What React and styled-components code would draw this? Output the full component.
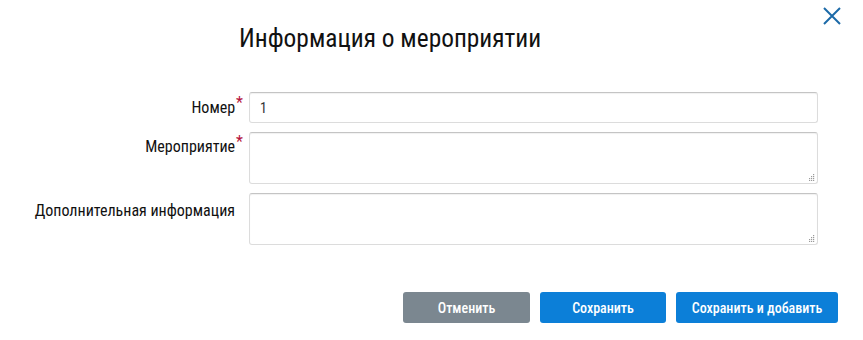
import React from "react";
import styled, { createGlobalStyle } from "styled-components";

const GlobalStyle = createGlobalStyle`
  html, body {
    margin: 0;
    padding: 0;
    background: #fff;
  }
  body {
    font-family: "Roboto Condensed", Roboto, sans-serif;
    font-stretch: condensed;
    color: #1a1a1a;
  }
`;

const Modal = styled.div`
  width: 863px;
  height: 340px;
  position: relative;
  box-sizing: border-box;
  padding: 22px 25px 0 0;
  display: flex;
  flex-direction: column;
`;

const CloseButton = styled.button`
  position: absolute;
  top: 5px;
  right: 20px;
  width: 22px;
  height: 22px;
  padding: 0;
  border: none;
  background: transparent;
  cursor: pointer;
`;

const Title = styled.h2`
  margin: 0 0 0 239px;
  font-size: 25.4px;
  font-weight: 400;
  line-height: 32px;
  color: #111;
`;

const Form = styled.form`
  margin-top: 38px;
  padding-right: 20px;
  display: flex;
  flex-direction: column;
  gap: 9px;
`;

const Row = styled.div`
  display: grid;
  grid-template-columns: 243px 1fr;
  column-gap: 6px;
  align-items: ${(p) => (p.$center ? "center" : "start")};
`;

const Label = styled.label`
  text-align: right;
  font-size: 16px;
  color: #111;
  padding-top: ${(p) => p.$top || 0}px;
  padding-right: ${(p) => (p.$required ? 0 : 8)}px;
  white-space: nowrap;
`;

const Star = styled.span`
  color: #b5143c;
  font-size: 16px;
  position: relative;
  top: -5px;
  margin-left: 1px;
`;

const Input = styled.input`
  box-sizing: border-box;
  width: 100%;
  height: 31px;
  border: 1px solid #dcdcdc;
  border-top-color: #c4c4c4;
  border-radius: 3px;
  box-shadow: inset 0 1px 1px rgba(0, 0, 0, 0.06);
  padding: 0 10px;
  font-family: inherit;
  font-stretch: inherit;
  font-size: 14px;
  color: #333;
  outline: none;
`;

const AreaWrap = styled.div`
  position: relative;
`;

const Area = styled.textarea`
  display: block;
  box-sizing: border-box;
  width: 100%;
  height: 52px;
  border: 1px solid #dcdcdc;
  border-top-color: #c4c4c4;
  border-radius: 3px;
  box-shadow: inset 0 1px 1px rgba(0, 0, 0, 0.06);
  padding: 6px 10px;
  font-family: inherit;
  font-size: 14px;
  resize: none;
  outline: none;
`;

const Grip = styled.svg`
  position: absolute;
  right: 3px;
  bottom: 3px;
  width: 7px;
  height: 7px;
`;

const Footer = styled.div`
  margin-top: 47px;
  display: flex;
  justify-content: flex-end;
  gap: 10px;
`;

const Button = styled.button`
  box-sizing: border-box;
  width: ${(p) => p.$w}px;
  height: 31px;
  border: none;
  border-radius: 3px;
  background: ${(p) => (p.$secondary ? "#7b8790" : "#0c7fd8")};
  color: #fff;
  font-family: inherit;
  font-stretch: inherit;
  font-size: 14px;
  font-weight: 500;
  cursor: pointer;
`;

const ResizeGrip = () => (
  <Grip viewBox="0 0 7 7">
    {[
      [5, 0],
      [5, 2],
      [3, 2],
      [5, 4],
      [3, 4],
      [1, 4],
      [5, 6],
      [3, 6],
      [1, 6],
    ].map(([x, y]) => (
      <rect key={`${x}-${y}`} x={x} y={y} width="1.2" height="1.2" fill="#9a9a9a" />
    ))}
  </Grip>
);

export default function App() {
  return (
    <>
      <GlobalStyle />
      <Modal>
        <CloseButton aria-label="Закрыть">
          <svg viewBox="0 0 22 22" width="22" height="22">
            <path d="M3 3 L19 19 M19 3 L3 19" stroke="#1c6aa8" strokeWidth="2" fill="none" />
          </svg>
        </CloseButton>
        <Title>Информация о мероприятии</Title>
        <Form>
          <Row $center>
            <Label $required>
              Номер<Star>*</Star>
            </Label>
            <Input defaultValue="1" />
          </Row>
          <Row>
            <Label $required $top={5}>
              Мероприятие<Star>*</Star>
            </Label>
            <AreaWrap>
              <Area />
              <ResizeGrip />
            </AreaWrap>
          </Row>
          <Row>
            <Label $top={8}>Дополнительная информация</Label>
            <AreaWrap>
              <Area />
              <ResizeGrip />
            </AreaWrap>
          </Row>
        </Form>
        <Footer>
          <Button type="button" $secondary $w={127}>
            Отменить
          </Button>
          <Button type="button" $w={126}>
            Сохранить
          </Button>
          <Button type="button" $w={162}>
            Сохранить и добавить
          </Button>
        </Footer>
      </Modal>
    </>
  );
}
